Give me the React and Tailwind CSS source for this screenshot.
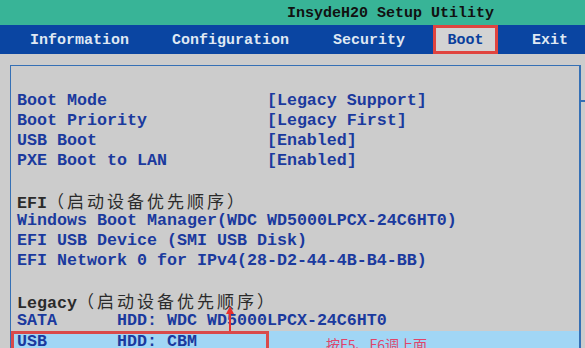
const mono = { fontFamily: '"Liberation Mono", "DejaVu Sans Mono", "Noto Sans CJK SC", monospace' }

const Cjk = ({ children }) => (
  <span className="text-[17px] tracking-[3px] font-normal" style={{ fontFamily: '"Noto Sans CJK SC", sans-serif' }}>
    {children}
  </span>
)

const Row = ({ label, value, dark }) => (
  <div className={`h-5 leading-5 whitespace-pre ${dark ? 'text-[#2b2b2b]' : 'text-[#1b3a9e]'}`}>
    {label}
    {value}
  </div>
)

export default function App() {
  const tabs = [
    { name: 'Information', ml: 'ml-[30px]' },
    { name: 'Configuration', ml: 'ml-[43px]' },
    { name: 'Security', ml: 'ml-[44px]' },
  ]
  return (
    <div className="w-[585px] h-[348px] overflow-hidden bg-[#cccccc] flex flex-col" style={mono}>
      <div className="h-[25px] shrink-0 bg-[#38b497] flex items-end pl-[287px]">
        <span className="text-[15px] font-bold text-[#111] leading-[22px]">InsydeH20 Setup Utility</span>
      </div>
      <div className="h-[29px] shrink-0 bg-[#0a45a2] flex items-center pt-[3px] text-[15px] font-bold text-[#dfe8f3]">
        {tabs.map((t) => (
          <span key={t.name} className={t.ml}>{t.name}</span>
        ))}
        <span className="ml-[28px] -mt-[3px] h-[29px] w-[65px] border-[3px] border-[#e0443f] bg-[#d3d3d3] text-[#0a3f9c] flex items-center justify-center pt-[3px]">
          Boot
        </span>
        <span className="ml-[34px]">Exit</span>
      </div>
      <div className="flex-1 min-h-0 relative pt-[11px] pl-[10px]">
        <div className="h-full border-t border-l border-[#3570b5] mr-[4px] border-r-2 pt-[25px] text-[16.67px] font-bold">
          <div className="pl-[6px]">
            <Row label="Boot Mode                " value="[Legacy Support]" />
            <Row label="Boot Priority            " value="[Legacy First]" />
            <Row label="USB Boot                 " value="[Enabled]" />
            <Row label="PXE Boot to LAN          " value="[Enabled]" />
            <div className="h-5" />
            <Row dark label="EFI" value={<Cjk>（启动设备优先顺序）</Cjk>} />
            <Row label="Windows Boot Manager" value="(WDC WD5000LPCX-24C6HT0)" />
            <Row label="EFI USB Device " value="(SMI USB Disk)" />
            <Row label="EFI Network 0 for IPv4" value="(28-D2-44-4B-B4-BB)" />
            <div className="h-5" />
            <Row dark label="Legacy" value={<Cjk>（启动设备优先顺序）</Cjk>} />
            <Row label="SATA      " value="HDD: WDC WD5000LPCX-24C6HT0" />
          </div>
          <div className="h-[20px] bg-[#a1d6f5] flex items-start">
            <div className="w-[258px] h-[20px] border-[3px] border-[#d94a4a] pl-[3px] leading-[16px] whitespace-pre text-[#1b3a9e]">
              USB       HDD: CBM
            </div>
            <span
              className="ml-[57px] mt-[5px] text-[14px] font-normal text-[#e0456a] leading-[16px]"
              style={{ fontFamily: '"Noto Sans CJK SC", sans-serif' }}
            >
              按F5、F6调上面
            </span>
          </div>
        </div>
        <div className="absolute right-0 top-[46px] w-[6px] h-[2px] bg-[#3570b5]" />
        <svg className="absolute left-[225px] top-[251px]" width="10" height="26" viewBox="0 0 10 26">
          <path d="M5 26 L5 4" stroke="#e8302f" strokeWidth="2" />
          <path d="M1 9 L5 1 L9 9 Z" fill="#e8302f" />
        </svg>
      </div>
    </div>
  )
}
